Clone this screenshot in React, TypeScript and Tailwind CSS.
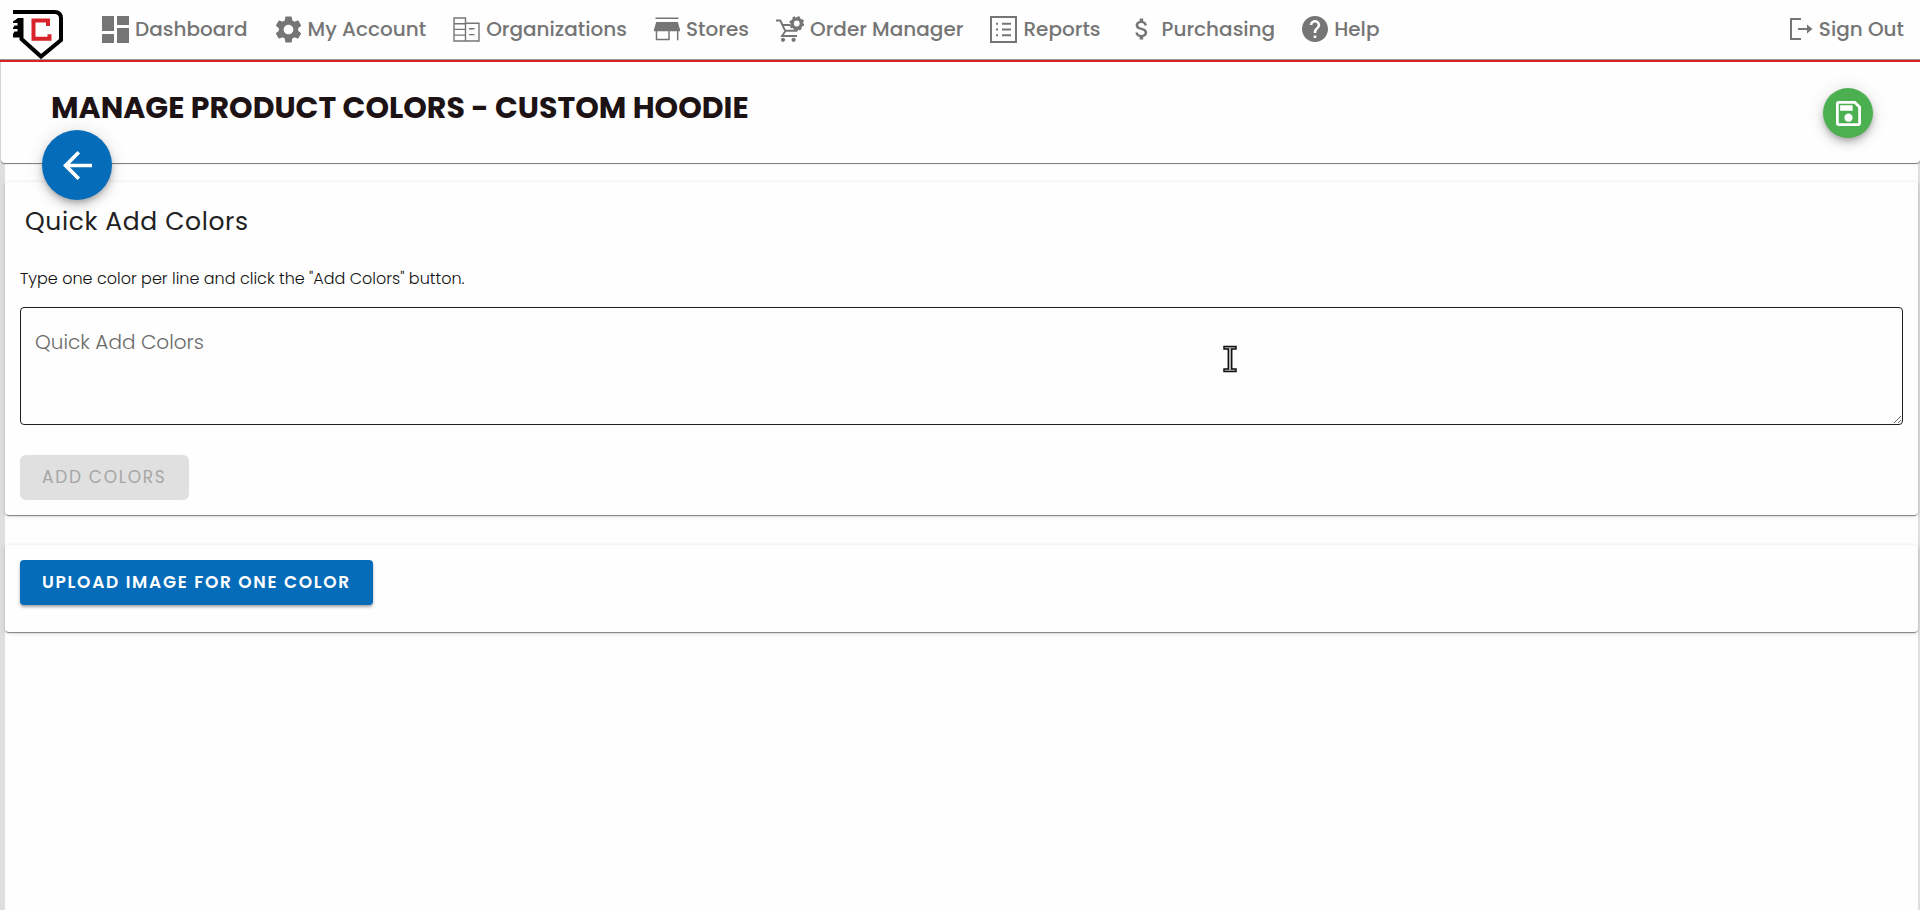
import type { ReactNode } from 'react';
import { MdArrowBack, MdAttachMoney, MdDashboard, MdHelp, MdOutlineSave, MdSettings } from 'react-icons/md';

function BusinessIcon() {
  return (
    <svg viewBox="0 0 27 25" className="h-[25px] w-[27px]" fill="none" stroke="currentColor" strokeWidth="1.4">
      <path d="M1 1h11.5v23H1zM12.5 6.2H26V24H12.5M1 6.7h11.5M1 12.4h11.5M1 18.1h11.5M16 11.8h5.500M16 17.600h5.500" />
    </svg>
  );
}

function StoreIcon() {
  return (
    <svg viewBox="0 0 26 24" className="h-6 w-[26px]" fill="currentColor">
      <path d="M1.500 0.500h23v1.500h-23zM2.200 5h21.600L26 12.500v1.800H0v-1.800z" />
      <path d="M2.500 14v8.600h12.500V14M23.700 14v9.300" fill="none" stroke="currentColor" strokeWidth="1.500" />
    </svg>
  );
}

function CartIcon() {
  return (
    <svg viewBox="0 0 28 26" className="h-[26px] w-7" fill="none" stroke="currentColor">
      <path d="M0 4.500h4.300l5 10.700M9.300 15.200L6 20h15M6.500 9h8M9.300 14.800h11.200l1.500-2" strokeWidth="1.900" />
      <circle cx="7" cy="23.800" r="2.100" fill="currentColor" stroke="none" />
      <circle cx="17.600" cy="23.800" r="2.100" fill="currentColor" stroke="none" />
      <circle cx="20.800" cy="7.500" r="4.600" strokeWidth="3.400" />
      <circle cx="20.800" cy="7.500" r="6.500" strokeWidth="1.800" strokeDasharray="2.550 2.550" />
    </svg>
  );
}

function ReportsIcon() {
  return (
    <svg viewBox="0 0 27 27" className="h-[27px] w-[27px]" fill="none" stroke="currentColor">
      <path d="M1 1h25v25H1z" strokeWidth="2" />
      <path d="M12 7.700h9M12 13.500h9M12 19.300h9" strokeWidth="1.900" />
      <path d="M6 7.700h2M6 13.500h2M6 19.300h2" strokeWidth="2" />
    </svg>
  );
}

function SignOutIcon() {
  return (
    <svg viewBox="0 0 24 24" className="h-6 w-6" fill="none" stroke="currentColor" strokeWidth="2">
      <path d="M12 2H2v20h10M9 12h10" />
      <path d="M18 7.500l5.500 4.500-5.500 4.500z" fill="currentColor" stroke="none" />
    </svg>
  );
}

function Logo() {
  return (
    <svg viewBox="0 0 50 50" className="h-[50px] w-[50px]" fill="none">
      <path d="M0 2H41.500q6.500 0 6.500 6.500V30L28 46.500 8.500 29V8" stroke="#000" strokeWidth="4" />
      <path d="M10 8H5L0 11.500V13h4.500v2.500H1.500L0 18v1h4.500v2.500H1.500L0 24v3.500h10z" fill="#000" />
      <path d="M35 16v-5.500H20.500v18.300H36.500v-4.600" stroke="#d8232a" strokeWidth="4" />
    </svg>
  );
}

const navItems: { label: string; icon: ReactNode }[] = [
  { label: 'Dashboard', icon: <MdDashboard viewBox="3 3 18 18" className="h-[27px] w-[27px]" /> },
  { label: 'My Account', icon: <MdSettings viewBox="2 2 20 20" className="h-[27px] w-[27px]" /> },
  { label: 'Organizations', icon: <BusinessIcon /> },
  { label: 'Stores', icon: <StoreIcon /> },
  { label: 'Order Manager', icon: <CartIcon /> },
  { label: 'Reports', icon: <ReportsIcon /> },
  { label: 'Purchasing', icon: <MdAttachMoney className="h-7 w-7" /> },
  { label: 'Help', icon: <MdHelp viewBox="2 2 20 20" className="h-[26px] w-[26px]" /> },
];

const cardShadow = 'shadow-[0_2px_1px_-1px_rgba(0,0,0,0.3),0_1px_1px_rgba(0,0,0,0.2),0_1px_4px_rgba(0,0,0,0.16)]';
const fabShadow = 'shadow-[0_3px_5px_-1px_rgba(0,0,0,0.2),0_6px_10px_rgba(0,0,0,0.14),0_1px_18px_rgba(0,0,0,0.12)]';

export default function App() {
  return (
    <div className="flex min-h-screen flex-col bg-[#dedede] font-['Poppins','Inter',sans-serif] text-[#212121]">
      {/* Top navigation */}
      <header className="flex h-[62px] items-center border-b-2 border-[#d8232a] bg-[#fefefe] pr-4 pl-[13px] text-[20px] font-medium text-[#757575] shadow-[inset_0_-1px_0_#999]">
        <a href="#" aria-label="Home" className="mr-[39px] shrink-0 self-end">
          <Logo />
        </a>
        <nav className="flex grow items-center gap-[27px] pb-0.5">
          {navItems.map((item) => (
            <a key={item.label} href="#" className="flex items-center gap-1.5 whitespace-nowrap">
              {item.icon}
              {item.label}
            </a>
          ))}
        </nav>
        <a href="#" className="flex items-center gap-1.5 pb-0.5 whitespace-nowrap">
          <SignOutIcon />
          Sign Out
        </a>
      </header>

      {/* Page title */}
      <div className="relative ml-px flex h-[101px] items-start justify-between rounded-b bg-[#fefefe] pr-[47px] pl-[50px] shadow-[0_1px_1px_#777]">
        <h1 className="mt-7 text-[30px] leading-9 font-bold text-[#1d1315]">MANAGE PRODUCT COLORS - CUSTOM HOODIE</h1>
        <button aria-label="Save" className={`mt-[26px] flex h-[50px] w-[50px] items-center justify-center rounded-full bg-[#4caf50] text-white ${fabShadow}`}>
          <MdOutlineSave viewBox="3 3 18 18" className="h-[25px] w-[25px]" />
        </button>
        <button aria-label="Back" className={`absolute -bottom-[37px] left-[41px] flex h-[70px] w-[70px] items-center justify-center rounded-full bg-[#056cb9] text-white ${fabShadow}`}>
          <MdArrowBack viewBox="4 4 16 16" className="h-[29px] w-[29px]" />
        </button>
      </div>

      <main className="mr-0.5 ml-[5px] grow bg-[#fefefe] pt-[19px]">
        <section className={`rounded px-[15px] pt-[22px] pb-[15px] ${cardShadow}`}>
          <h2 className="px-[5px] text-[25px] leading-9 tracking-wide">Quick Add Colors</h2>
          <p className="mt-[27px] text-base leading-6 font-light text-[#111]">Type one color per line and click the "Add Colors" button.</p>
          <textarea
            aria-label="Quick Add Colors"
            placeholder="Quick Add Colors"
            className="mt-4 block h-[118px] w-full resize-y rounded border border-[#1f1f1f] bg-transparent px-[14px] py-[19px] text-xl leading-[30px] font-light placeholder:text-[#6b6b6b]"
          />
          <button disabled className="mt-[30px] h-[45px] rounded-md bg-[#e0e0e0] px-[22px] text-[17px] tracking-widest text-[#a6a6a6]">
            ADD COLORS
          </button>
        </section>

        <section className={`mt-[30px] rounded px-[15px] pt-[15px] pb-[27px] ${cardShadow}`}>
          <button className="h-[45px] rounded bg-[#056cb9] px-[22px] text-[17px] font-semibold tracking-widest text-white shadow-[0_2px_3px_rgba(0,0,0,0.35)]">
            UPLOAD IMAGE FOR ONE COLOR
          </button>
        </section>
      </main>

      {/* Text cursor */}
      <svg viewBox="0 0 14 28" className="pointer-events-none absolute top-[345px] left-[1223px] h-7 w-[14px]" fill="#bbb" stroke="#111" strokeWidth="1.500">
        <path d="M1 1.500h12v2.500H8.700v20H13v2.500H1V24h4.300V4H1z" />
      </svg>
    </div>
  );
}
